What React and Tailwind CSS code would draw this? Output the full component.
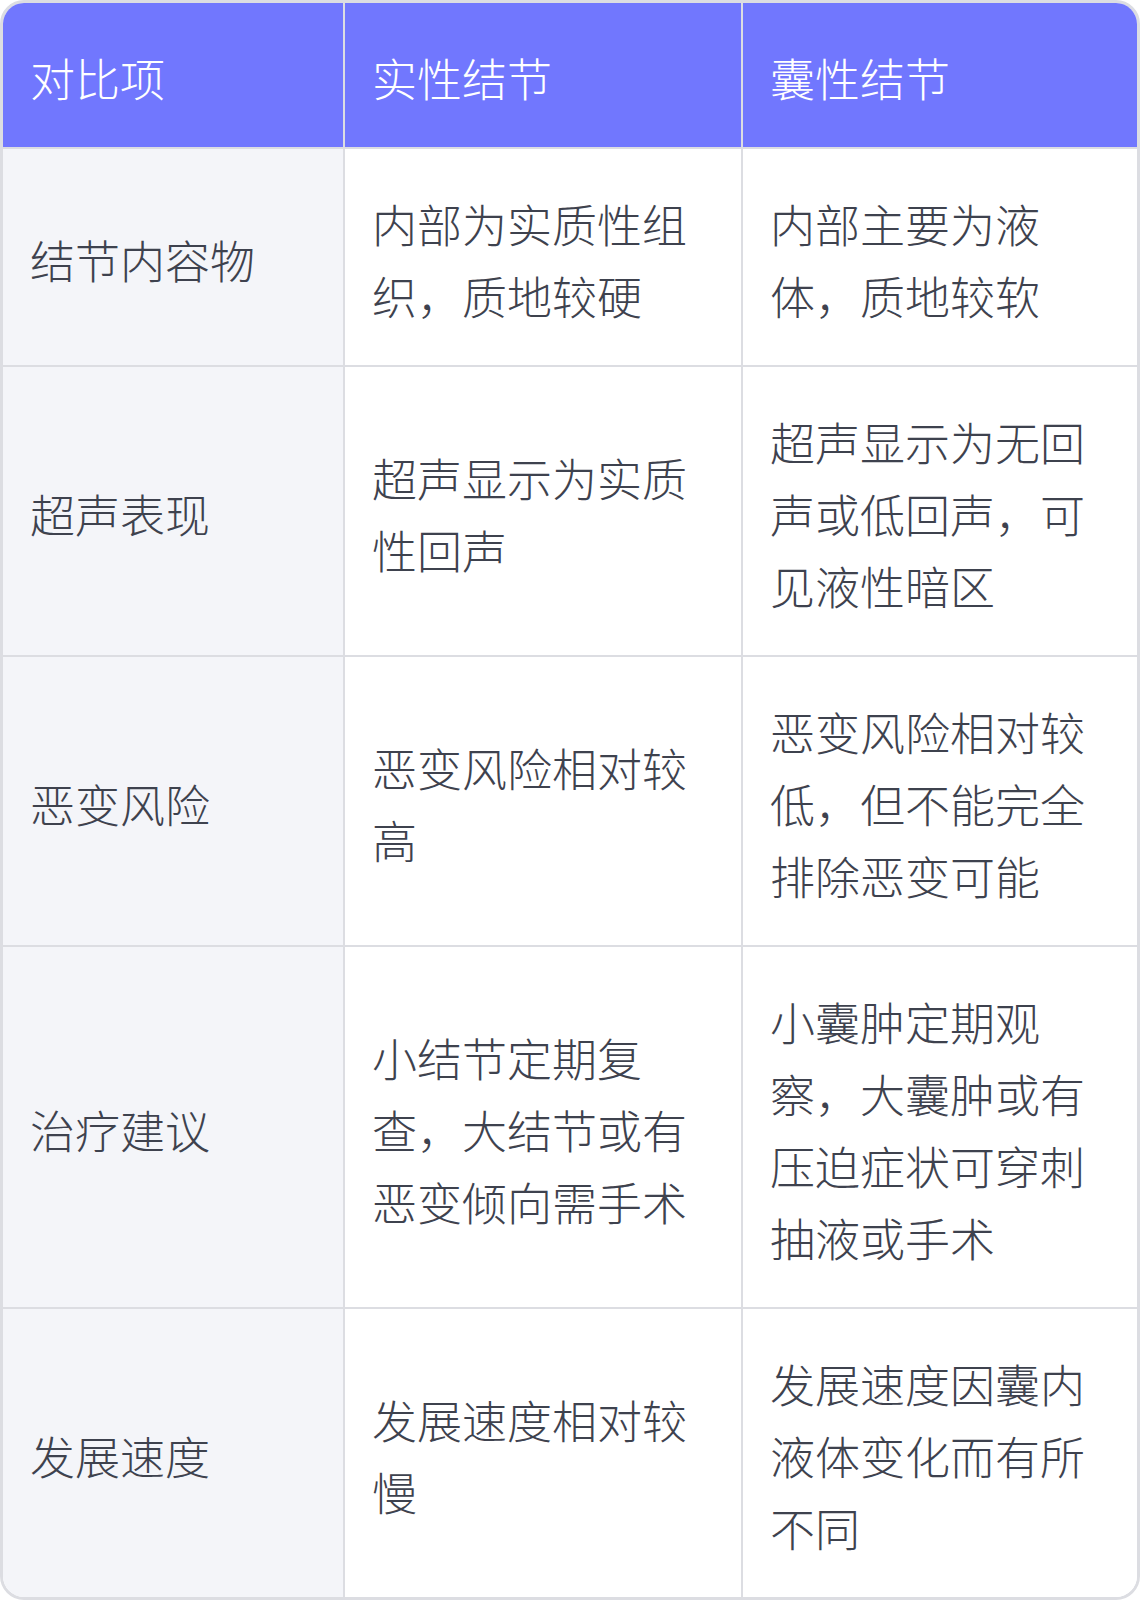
import React from "react";

const rows = [
  ["结节内容物", "内部为实质性组织，质地较硬", "内部主要为液体，质地较软"],
  ["超声表现", "超声显示为实质性回声", "超声显示为无回声或低回声，可见液性暗区"],
  ["恶变风险", "恶变风险相对较高", "恶变风险相对较低，但不能完全排除恶变可能"],
  ["治疗建议", "小结节定期复查，大结节或有恶变倾向需手术", "小囊肿定期观察，大囊肿或有压迫症状可穿刺抽液或手术"],
  ["发展速度", "发展速度相对较慢", "发展速度因囊内液体变化而有所不同"],
];

export default function App() {
  return (
    <div
      className="w-[1140px] h-[1600px] bg-white border-[3px] border-[#dcdde2] rounded-[24px] overflow-hidden font-light"
      style={{ fontFamily: '"Noto Sans CJK SC", "Noto Sans", sans-serif' }}
    >
      <div className="grid grid-cols-[342px_398px_1fr] text-[45px] leading-[72px]">
        <div className="bg-[#7177fe] text-white pl-[27px] pr-[26px] pt-[39px] pb-[33px] border-r-2 border-b-2 border-[#dcdde2]">对比项</div>
        <div className="bg-[#7177fe] text-white pl-[27px] pr-[26px] pt-[39px] pb-[33px] border-r-2 border-b-2 border-[#dcdde2]">实性结节</div>
        <div className="bg-[#7177fe] text-white pl-[27px] pr-[26px] pt-[39px] pb-[33px] border-b-2 border-[#dcdde2]">囊性结节</div>
        {rows.map((r, i) => {
          const last = i === rows.length - 1;
          return (
            <React.Fragment key={i}>
              <div className={"bg-[#f4f5f9] text-[#3e424e] pl-[27px] pr-[26px] pt-[39px] pb-[33px] border-r-2 border-[#dcdde2] flex items-center " + (last ? "" : "border-b-2")}>{r[0]}</div>
              <div className={"bg-white text-[#3e424e] pl-[27px] pr-[26px] pt-[39px] pb-[33px] border-r-2 border-[#dcdde2] flex items-center " + (last ? "" : "border-b-2")}>{r[1]}</div>
              <div className={"bg-white text-[#3e424e] pl-[27px] pr-[26px] pt-[39px] pb-[33px] border-[#dcdde2] flex items-center " + (last ? "" : "border-b-2")}>{r[2]}</div>
            </React.Fragment>
          );
        })}
      </div>
    </div>
  );
}
